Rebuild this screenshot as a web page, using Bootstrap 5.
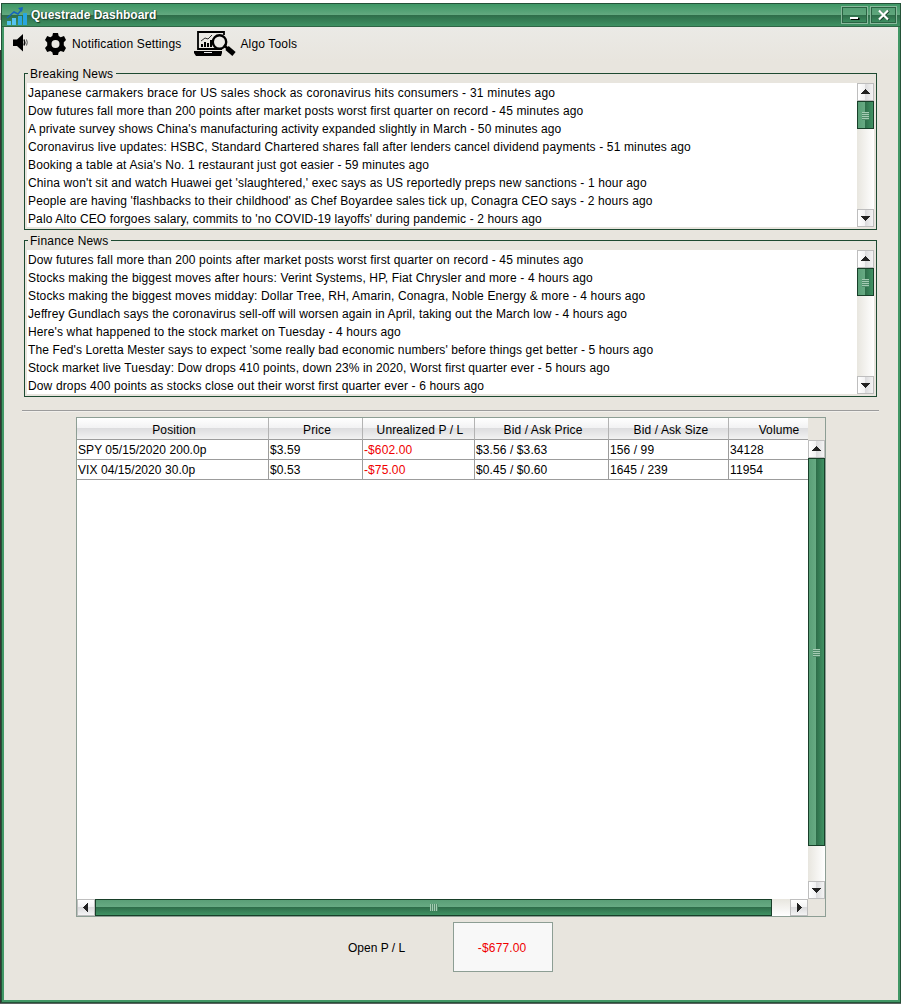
<!DOCTYPE html>
<html lang="en">
<head>
<meta charset="utf-8">
<title>Questrade Dashboard</title>
<link href="https://cdn.jsdelivr.net/npm/bootstrap@5.3.0/dist/css/bootstrap.min.css" rel="stylesheet">
<style>
body{font:12px/18px "Liberation Sans",Arial,sans-serif;color:#000;background:linear-gradient(#fff 0 13px,#b5adb5 13px 20px,#fff 20px 50px,#343434 50px);height:1004px;overflow:hidden;padding:3px 0 0 1px;border-bottom:1px solid #5c6461;position:relative}
body::before{content:"";position:absolute;left:0;top:0;width:100%;height:3px;background:#fff}
.win{height:1000px;border:1px solid #245238;background:#419765}
.titlebar{height:23px;padding:0 3px 0 4px;border-bottom:1px solid #2f6645;background:linear-gradient(#3e9765 0,#63a980 11px,#2e6c49 11px,#3f9263 22px)}
.titlebar .caption{color:#fff;font-weight:bold;text-shadow:1px 1px 1px #163d27,-1px 0 1px #2a6041;margin-left:3px;padding-top:1px;line-height:23px;white-space:nowrap}
.winbtn{width:27px;height:18px;border:1px solid #88b99c;background:linear-gradient(#559f75 0,#5fa67c 8px,#2e6c49 8px,#3f9263);box-shadow:inset 0 0 0 1px #2b6443;padding:0;line-height:0}
.pane{margin:0 2px 2px 2px;height:973px;background:linear-gradient(#ebeae6,#e8e5de 34px)}
.tools{height:46px;padding-left:8px}
.tools .lbl{line-height:34px;white-space:nowrap;letter-spacing:.16px}
.group{margin:0 21px 0 20px;height:157px;border:1px solid #1d4a31;padding:9px 2px 2px;position:relative}
.group .legend-text{position:absolute;left:3px;top:-9px;padding:0 3px 0 2px;background:#e8e5de;letter-spacing:.2px}
.news{background:#fff;padding:1px 0 0 1px;overflow:hidden;white-space:nowrap;min-width:0;letter-spacing:.14px}
.ls-a{letter-spacing:.233px}.ls-b{letter-spacing:.105px}.ls-c{letter-spacing:.118px}
.vbar{width:17px;background:linear-gradient(90deg,#e8e6df,#fff)}
.hbar{height:17px;background:linear-gradient(#e8e6df,#fff)}
.arrow{width:17px;height:18px;border:1px solid #bebebe;background:linear-gradient(90deg,#fff,#f2f2f3 7px,#dadadc 7px,#f4f4f4);flex:none;line-height:0}
.hbar .arrow{width:18px;height:17px;background:linear-gradient(#fff,#f2f2f3 7px,#dadadc 7px,#f4f4f4)}
.thumb{border:1px solid #183f29;background:linear-gradient(90deg,#5a9f77,#67aa83 7px,#2e6c49 7px,#3f9263);flex:none}
.hbar .thumb{background:linear-gradient(#5a9f77,#67aa83 7px,#2e6c49 7px,#3f9263)}
.grip{width:7px;height:8px;background:repeating-linear-gradient(#a4cbb3 0 1px,#4f8c69 1px 2px)}
.vbar .grip{margin-top:2px}
.hbar .grip{width:8px;height:7px;background:repeating-linear-gradient(90deg,#a4cbb3 0 1px,#4f8c69 1px 2px)}
.short{height:28px}.tall{height:388px}.wide{width:677px}
.rule{height:2px;margin:13px 19px 5px 18px;background:linear-gradient(#9c9c9c 50%,#f2f0ec 50%)}
.sheet{width:750px;height:500px;margin-left:72px;border:1px solid #8d9e94;background:#e8e5de}
.view{width:731px;background:#fff;overflow:hidden}
.grid-table{width:752px;table-layout:fixed;border-collapse:separate;border-spacing:0;white-space:nowrap}
.grid-table th{font-weight:normal;text-align:center;height:22px;padding:2px 0 0 3px;letter-spacing:.1px;border-right:1px solid #b3b3b3;border-bottom:1px solid #9c9c9c;background:linear-gradient(#fff,#f2f2f3 10px,#dcdcde 10px,#f2f2f2)}
.grid-table th:nth-child(5){padding-left:5px}
.grid-table th:last-child{padding-left:1px}
.grid-table td{height:20px;padding:1px 0 0 1px;border-right:1px solid #9c9c9c;border-bottom:1px solid #9c9c9c;line-height:18px;letter-spacing:.1px}
.grid-table td:first-child{letter-spacing:.06px}
.loss{color:#f00000}
.total{width:100px;height:50px;border:1px solid #8d9e94;background:#f8f8f8;margin-left:48px;padding:2px 2px 0 0;letter-spacing:.15px}
svg{display:block}
</style>
<script src="https://cdn.jsdelivr.net/npm/bootstrap@5.3.0/dist/js/bootstrap.bundle.min.js"></script>
</head>
<body>
<svg width="0" height="0" class="position-absolute"><defs>
<path id="up" shape-rendering="crispEdges" d="M7 5h1v1h1v1h1v1h1v1h1v1H3V9h1V8h1V7h1V6h1z"/>
<path id="down" shape-rendering="crispEdges" d="M3 6h9v1h-1v1h-1v1H9v1H8v1H7v-1H6V9H5V8H4V7H3z"/>
</defs></svg>
<main class="win">
<header class="titlebar d-flex align-items-center">
 <svg width="22" height="22" viewBox="0 0 22 22"><path fill="#54c3f2" d="M1 17h4v4H1zM6 14h4v7H6z"/><path fill="#28a6df" d="M12 12h4v9h-4zM17 9h4v12h-4z"/><path fill="none" stroke="#1465bd" stroke-width="1.500" d="M1 14 8 8l4 2 4-5"/><path fill="#1465bd" d="m12 4 5-1-1 5z"/></svg>
 <span class="caption">Questrade Dashboard</span>
 <button class="winbtn ms-auto" style="margin-right:2px" aria-label="Minimize"><svg width="25" height="16"><path stroke="#000" stroke-width="2" d="M9 12h8.500"/><path stroke="#fff" stroke-width="2" d="M8 11h8"/></svg></button>
 <button class="winbtn" aria-label="Close"><svg width="25" height="16"><path stroke="#173c28" stroke-width="2" d="m9 4 9 9m0-9-9 9"/><path stroke="#fff" stroke-width="2.200" d="m8 3.500 9 9m0-9-9 9"/></svg></button>
</header>
<div class="pane">
 <nav class="tools d-flex align-items-start">
  <svg style="margin-top:7px" width="17" height="18" viewBox="0 0 17 18"><path d="M1 5.500h4L11 0v17.500L5 12H1z"/><path fill="none" stroke="#111" stroke-width="1.500" d="M12 5.500q1.500 3 0 6"/><path fill="none" stroke="#555" d="M14.500 5.500q1.500 3 0 6"/></svg>
  <svg style="margin:6px 0 0 16px" width="21" height="22" viewBox="0 0 21 22"><path fill-rule="evenodd" d="M8 0h5l.7 3 2 1.200L19 3l2 4-2.200 2.300v3L21 15l-2.200 4-3.100-1-2 1.200L13 22H8l-.7-2.800-2-1.200-3.100 1L0 15l2.200-2.500v-3L0 7l2.200-4 3.100 1.200 2-1.200zM10.500 7a4 4 0 1 0 0 8 4 4 0 0 0 0-8z"/></svg>
  <span class="lbl" style="margin-left:6px">Notification Settings</span>
  <svg style="margin:4px 0 0 13px" width="42" height="26" viewBox="0 0 42 26"><path fill="none" stroke="#000" stroke-width="1.800" d="M30 4V1H4v17h24"/><path d="M0 20h28v2l-1 3H2l-2-3z"/><path fill="#eee" d="M10 21h8v1h-8z"/><path d="M7 13h2v3H7zm3-2h2v5h-2zm3 1h2v4h-2zm3-3h2v7h-2z"/><path fill="none" stroke="#000" stroke-width=".8" d="m7 10 4-3 3 1 4-4"/><circle cx="25.500" cy="11" r="6.700" fill="#ebeae6" stroke="#000" stroke-width="2.400"/><path stroke="#000" stroke-width="5" d="m33 17 7 6"/><path stroke="#000" stroke-width="2.500" d="m30 14 4 4"/></svg>
  <span class="lbl" style="margin-left:4px">Algo Tools</span>
 </nav>
 <section class="group d-flex">
  <span class="legend-text">Breaking News</span>
  <div class="news flex-grow-1">
   <div class="ls-a">Japanese carmakers brace for US sales shock as coronavirus hits consumers - 31 minutes ago</div>
   <div>Dow futures fall more than 200 points after market posts worst first quarter on record - 45 minutes ago</div>
   <div class="ls-b">A private survey shows China's manufacturing activity expanded slightly in March - 50 minutes ago</div>
   <div>Coronavirus live updates: HSBC, Standard Chartered shares fall after lenders cancel dividend payments - 51 minutes ago</div>
   <div>Booking a table at Asia's No. 1 restaurant just got easier - 59 minutes ago</div>
   <div>China won't sit and watch Huawei get 'slaughtered,' exec says as US reportedly preps new sanctions - 1 hour ago</div>
   <div>People are having 'flashbacks to their childhood' as Chef Boyardee sales tick up, Conagra CEO says - 2 hours ago</div>
   <div class="ls-c">Palo Alto CEO forgoes salary, commits to 'no COVID-19 layoffs' during pandemic - 2 hours ago</div>
  </div>
  <div class="vbar d-flex flex-column">
   <div class="arrow"><svg width="15" height="16"><use href="#up" fill="#222"/></svg></div>
   <div class="thumb short d-flex align-items-center justify-content-center"><div class="grip"></div></div>
   <div class="arrow mt-auto"><svg width="15" height="16"><use href="#down" fill="#222"/></svg></div>
  </div>
 </section>
 <section class="group d-flex" style="margin-top:10px">
  <span class="legend-text">Finance News</span>
  <div class="news flex-grow-1">
   <div>Dow futures fall more than 200 points after market posts worst first quarter on record - 45 minutes ago</div>
   <div>Stocks making the biggest moves after hours: Verint Systems, HP, Fiat Chrysler and more - 4 hours ago</div>
   <div>Stocks making the biggest moves midday: Dollar Tree, RH, Amarin, Conagra, Noble Energy &amp; more - 4 hours ago</div>
   <div class="ls-b">Jeffrey Gundlach says the coronavirus sell-off will worsen again in April, taking out the March low - 4 hours ago</div>
   <div>Here's what happened to the stock market on Tuesday - 4 hours ago</div>
   <div class="ls-c">The Fed's Loretta Mester says to expect 'some really bad economic numbers' before things get better - 5 hours ago</div>
   <div class="ls-b">Stock market live Tuesday: Dow drops 410 points, down 23% in 2020, Worst first quarter ever - 5 hours ago</div>
   <div>Dow drops 400 points as stocks close out their worst first quarter ever - 6 hours ago</div>
  </div>
  <div class="vbar d-flex flex-column">
   <div class="arrow"><svg width="15" height="16"><use href="#up" fill="#222"/></svg></div>
   <div class="thumb short d-flex align-items-center justify-content-center"><div class="grip"></div></div>
   <div class="arrow mt-auto"><svg width="15" height="16"><use href="#down" fill="#222"/></svg></div>
  </div>
 </section>
 <div class="rule"></div>
 <section class="sheet d-flex">
  <div class="d-flex flex-column">
   <div class="view flex-grow-1">
    <table class="grid-table">
     <colgroup><col style="width:192px"><col style="width:94px"><col style="width:112px"><col style="width:134px"><col style="width:120px"><col style="width:100px"></colgroup>
     <thead><tr><th>Position</th><th>Price</th><th>Unrealized P / L</th><th>Bid / Ask Price</th><th>Bid / Ask Size</th><th>Volume</th></tr></thead>
     <tbody>
      <tr><td>SPY 05/15/2020 200.0p</td><td>$3.59</td><td class="loss">-$602.00</td><td>$3.56 / $3.63</td><td>156 / 99</td><td>34128</td></tr>
      <tr><td>VIX 04/15/2020 30.0p</td><td>$0.53</td><td class="loss">-$75.00</td><td>$0.45 / $0.60</td><td>1645 / 239</td><td>11954</td></tr>
     </tbody>
    </table>
   </div>
   <div class="hbar d-flex">
    <div class="arrow"><svg width="16" height="15"><path shape-rendering="crispEdges" fill="#222" d="M10 3v9H9v-1H8v-1H7V9H6V8H5V7h1V6h1V5h1V4h1V3z"/></svg></div>
    <div class="thumb wide d-flex align-items-center justify-content-center"><div class="grip"></div></div>
    <div class="arrow ms-auto"><svg width="16" height="15"><path shape-rendering="crispEdges" fill="#222" d="M6 3v9h1v-1h1v-1h1V9h1V8h1V7h-1V6H9V5H8V4H7V3z"/></svg></div>
   </div>
  </div>
  <div class="vbar d-flex flex-column" style="margin:22px 0 17px">
   <div class="arrow"><svg width="15" height="16"><use href="#up" fill="#222"/></svg></div>
   <div class="thumb tall d-flex align-items-center justify-content-center"><div class="grip"></div></div>
   <div class="arrow mt-auto"><svg width="15" height="16"><use href="#down" fill="#222"/></svg></div>
  </div>
 </section>
 <footer class="d-flex align-items-center" style="margin:5px 0 0 344px">
  <span style="padding-top:2px">Open P / L</span>
  <output class="total loss d-flex align-items-center justify-content-center">-$677.00</output>
 </footer>
</div>
</main>
</body>
</html>
